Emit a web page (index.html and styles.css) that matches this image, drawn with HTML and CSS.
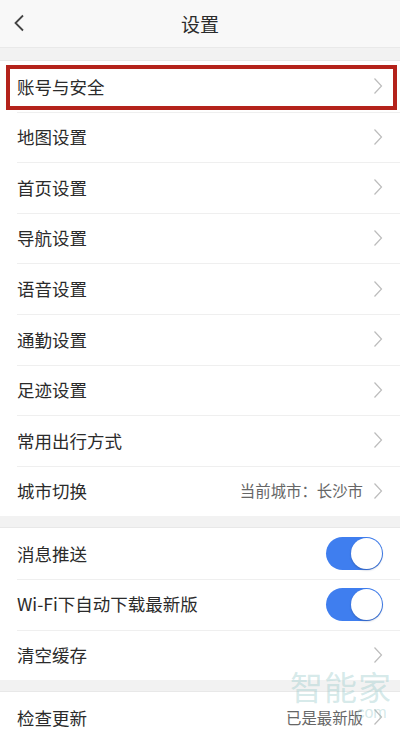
FILE: index.html
```html
<!DOCTYPE html>
<html lang="zh">
<head>
<meta charset="utf-8">
<link rel="stylesheet" href="styles.css">
</head>
<body>
<div class="page">
  <header class="topbar">
    <svg class="back" width="12" height="18" viewBox="0 0 12 18"><path d="M10 1.5 L2.5 9 L10 16.5" fill="none" stroke="#444" stroke-width="1.8"/></svg>
    <div class="title">设置</div>
  </header>
  <div class="band first"></div>
  <section class="group">
    <div class="row"><span class="label">账号与安全</span><svg class="chev" width="10" height="18" viewBox="0 0 10 18"><path d="M1.5 1.5 L8.5 9 L1.5 16.5" fill="none" stroke="#bcbcbc" stroke-width="1.2"/></svg><div class="mark"></div></div>
    <div class="row"><span class="label">地图设置</span><svg class="chev" width="10" height="18" viewBox="0 0 10 18"><path d="M1.5 1.5 L8.5 9 L1.5 16.5" fill="none" stroke="#bcbcbc" stroke-width="1.2"/></svg></div>
    <div class="row"><span class="label">首页设置</span><svg class="chev" width="10" height="18" viewBox="0 0 10 18"><path d="M1.5 1.5 L8.5 9 L1.5 16.5" fill="none" stroke="#bcbcbc" stroke-width="1.2"/></svg></div>
    <div class="row"><span class="label">导航设置</span><svg class="chev" width="10" height="18" viewBox="0 0 10 18"><path d="M1.5 1.5 L8.5 9 L1.5 16.5" fill="none" stroke="#bcbcbc" stroke-width="1.2"/></svg></div>
    <div class="row"><span class="label">语音设置</span><svg class="chev" width="10" height="18" viewBox="0 0 10 18"><path d="M1.5 1.5 L8.5 9 L1.5 16.5" fill="none" stroke="#bcbcbc" stroke-width="1.2"/></svg></div>
    <div class="row"><span class="label">通勤设置</span><svg class="chev" width="10" height="18" viewBox="0 0 10 18"><path d="M1.5 1.5 L8.5 9 L1.5 16.5" fill="none" stroke="#bcbcbc" stroke-width="1.2"/></svg></div>
    <div class="row"><span class="label">足迹设置</span><svg class="chev" width="10" height="18" viewBox="0 0 10 18"><path d="M1.5 1.5 L8.5 9 L1.5 16.5" fill="none" stroke="#bcbcbc" stroke-width="1.2"/></svg></div>
    <div class="row"><span class="label">常用出行方式</span><svg class="chev" width="10" height="18" viewBox="0 0 10 18"><path d="M1.5 1.5 L8.5 9 L1.5 16.5" fill="none" stroke="#bcbcbc" stroke-width="1.2"/></svg></div>
    <div class="row"><span class="label">城市切换</span><span class="value">当前城市：长沙市</span><svg class="chev" width="10" height="18" viewBox="0 0 10 18"><path d="M1.5 1.5 L8.5 9 L1.5 16.5" fill="none" stroke="#bcbcbc" stroke-width="1.2"/></svg></div>
  </section>
  <div class="band"></div>
  <section class="group">
    <div class="row"><span class="label">消息推送</span><span class="toggle"></span></div>
    <div class="row"><span class="label">Wi-Fi下自动下载最新版</span><span class="toggle"></span></div>
    <div class="row"><span class="label">清空缓存</span><svg class="chev" width="10" height="18" viewBox="0 0 10 18"><path d="M1.5 1.5 L8.5 9 L1.5 16.5" fill="none" stroke="#bcbcbc" stroke-width="1.2"/></svg></div>
  </section>
  <div class="band"></div>
  <section class="group">
    <div class="row"><span class="label">检查更新</span><span class="value">已是最新版</span><svg class="chev" width="10" height="18" viewBox="0 0 10 18"><path d="M1.5 1.5 L8.5 9 L1.5 16.5" fill="none" stroke="#bcbcbc" stroke-width="1.2"/></svg></div>
  </section>
  <div class="watermark"><span class="wm-main">智能家</span><span class="wm-sub">.com</span></div>
</div>
</body>
</html>
```

FILE: styles.css
```css
* { box-sizing: border-box; }
html, body { margin: 0; padding: 0; }
body {
  width: 400px;
  height: 737px;
  overflow: hidden;
  background: #f2f2f2;
  font-family: "Noto Sans CJK SC", "Noto Sans", sans-serif;
  color: #2b2b2b;
}
.page { position: relative; width: 400px; height: 737px; overflow: hidden; }
.topbar {
  height: 48px;
  background: #f8f8f8;
  border-bottom: 1px solid #e9e9e9;
  display: flex;
  align-items: center;
  justify-content: center;
  position: relative;
}
.back { position: absolute; left: 13px; top: 14px; }
.title { font-size: 19px; color: #2b2b2b; line-height: 1; }
.band { height: 12px; background: #f2f2f2; border-bottom: 1px solid #e8e8e8; }
.band.first { height: 13px; }
.group { background: #fff; }
.row {
  position: relative;
  height: 50.6px;
  display: flex;
  align-items: center;
  padding: 0 16px 0 17px;
}
.row + .row::before {
  content: "";
  position: absolute;
  left: 17px;
  right: 0;
  top: 0;
  border-top: 1px solid #efefef;
}
.label { font-size: 17.5px; color: #2b2b2b; flex: 1; line-height: 1; }
.value { font-size: 15.4px; color: #666; margin-right: 10px; line-height: 1; }
.chev { display: block; margin-right: 1px; }
.mark {
  position: absolute;
  left: 6px;
  right: 3px;
  top: 4px;
  height: 45px;
  border: 4px solid #b4221b;
}
.toggle {
  position: relative;
  width: 57px;
  height: 33px;
  border-radius: 17px;
  background: #3f7eef;
  margin-right: 1px;
}
.toggle::after {
  content: "";
  position: absolute;
  right: 1px;
  top: 1px;
  width: 31px;
  height: 31px;
  border-radius: 50%;
  background: #fff;
  box-shadow: 0 1px 2px rgba(30, 60, 120, 0.45);
}
.watermark {
  position: absolute;
  left: 290px;
  top: 668px;
  width: 110px;
  height: 60px;
  pointer-events: none;
}
.wm-main {
  position: absolute;
  left: 0;
  top: 0;
  font-size: 33px;
  letter-spacing: 1px;
  color: rgba(150, 200, 200, 0.4);
  line-height: 1.1;
}
.wm-sub {
  position: absolute;
  left: 62px;
  top: 36px;
  font-size: 16px;
  color: rgba(150, 200, 200, 0.4);
  font-family: "Liberation Sans", sans-serif;
}
```
